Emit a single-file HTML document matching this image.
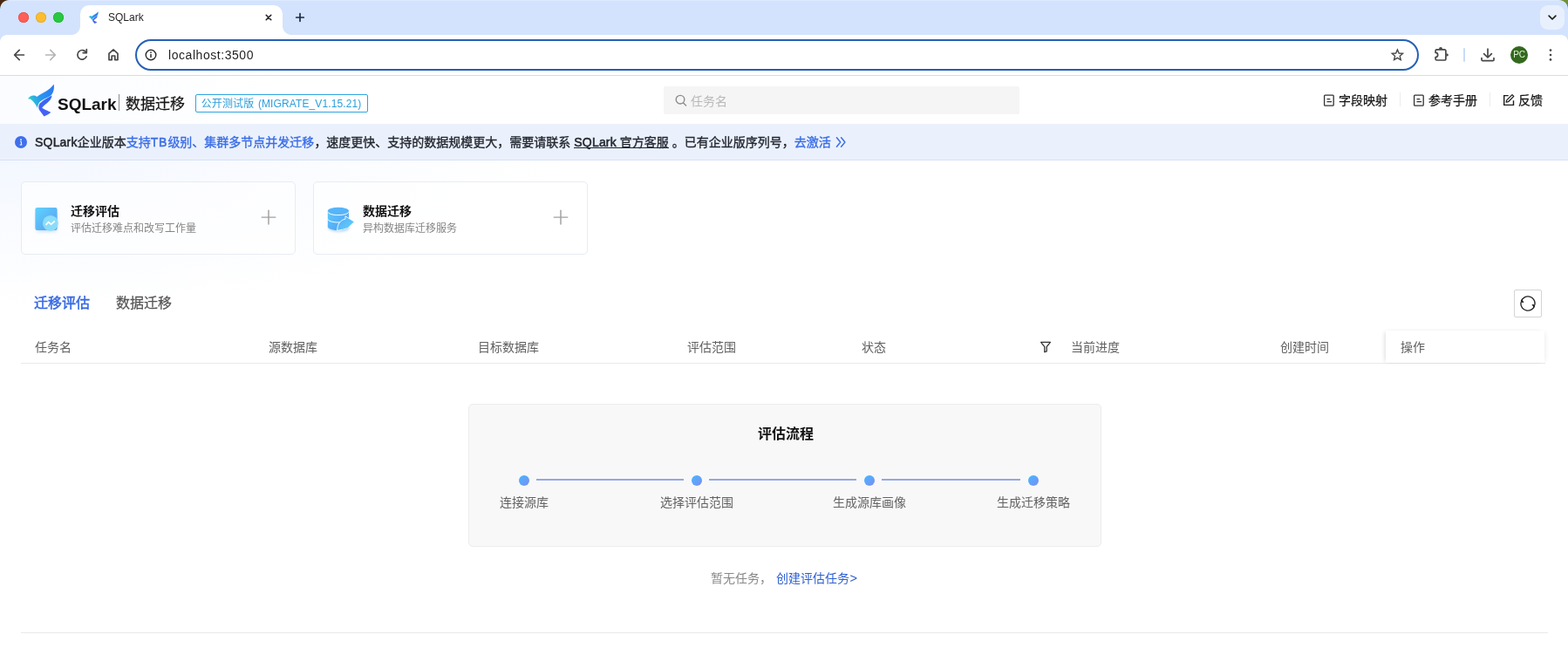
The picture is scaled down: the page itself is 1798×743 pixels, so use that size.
<!DOCTYPE html>
<html lang="zh-CN">
<head>
<meta charset="utf-8">
<title>SQLark</title>
<style>
*{box-sizing:border-box;margin:0;padding:0}
html,body{width:1798px;height:743px;overflow:hidden;background:#fff}
body{position:relative;font-family:"Liberation Sans","Noto Sans CJK SC",sans-serif;font-size:14px;color:#333}
.a{position:absolute}
svg{display:block}
.t{position:absolute;white-space:nowrap;line-height:1;will-change:transform}
.ic{position:absolute;overflow:visible;fill:none;stroke-linecap:round;stroke-linejoin:round}

/* ---------- browser chrome ---------- */
#strip{left:0;top:0;width:1798px;height:40px;background:#d3e3fd}
#strip:before{content:"";position:absolute;left:0;top:0;width:100%;height:1px;background:#deeafe}
.corner{width:10px;height:10px;top:0}
#cl{left:0;background:radial-gradient(circle at 10px 10px,rgba(0,0,0,0) 9.4px,#4a2611 10.2px)}
#cr{right:0;background:radial-gradient(circle at 0 10px,rgba(0,0,0,0) 9.4px,#6f8f3a 10.2px)}
.tl{width:12px;height:12px;border-radius:50%;top:14px}
#tab{left:92px;top:6px;width:232px;height:34px;background:#fff;border-radius:10px 10px 0 0}
#tab:before,#tab:after{content:"";position:absolute;bottom:0;width:10px;height:10px}
#tab:before{left:-10px;background:radial-gradient(circle at 0 0,rgba(255,255,255,0) 9.5px,#fff 10.3px)}
#tab:after{right:-10px;background:radial-gradient(circle at 10px 0,rgba(255,255,255,0) 9.5px,#fff 10.3px)}
#tsb{left:1766px;top:6px;width:28px;height:28px;border-radius:9px;background:#e8f0fe}
#bar{left:0;top:40px;width:1798px;height:47px;background:#fff;border-bottom:1px solid #dcdcdc}
#bl,#br{top:40px;width:8px;height:8px}
#bl{left:0;background:radial-gradient(circle at 8px 8px,rgba(211,227,253,0) 7.500px,#d3e3fd 8.300px)}
#br{right:0;background:radial-gradient(circle at 0 8px,rgba(211,227,253,0) 7.500px,#d3e3fd 8.300px)}
#url{left:155px;top:45px;width:1472px;height:36px;border:2px solid #2560b6;border-radius:18px;background:#fff}
#sep{left:1678px;top:55px;width:2px;height:16px;background:#c9dbf7;border-radius:1px}
#ava{will-change:transform;left:1732px;top:53px;width:20px;height:20px;border-radius:50%;background:#33691e;color:#e4f3da;font-size:10px;line-height:20px;text-align:center;letter-spacing:-.3px}
</style>
</head>
<body>

<!-- ================= BROWSER CHROME ================= -->
<div id="strip" class="a"></div>
<div id="cl" class="a corner"></div>
<div id="cr" class="a corner"></div>
<div class="a tl" style="left:21px;background:#ff5f57;box-shadow:inset 0 0 0 .6px #e14640"></div>
<div class="a tl" style="left:41px;background:#febc2e;box-shadow:inset 0 0 0 .6px #e0a028"></div>
<div class="a tl" style="left:61px;background:#28c840;box-shadow:inset 0 0 0 .6px #1eab2c"></div>
<div id="tab" class="a"></div>
<!-- favicon -->
<svg class="a" style="left:99.4px;top:10.8px" width="16.63" height="18.47" viewBox="0 0 669 743">
  <use href="#bird"/>
</svg>
<div class="t" style="left:124px;top:14.1px;font-size:12px;color:#1f1f1f">SQLark</div>
<svg class="ic" style="left:0;top:0" width="1798" height="86" viewBox="0 0 1798 86">
  <!-- tab close / new tab / tab search chevron -->
  <path d="M305.200 17.200l5.600 5.600M310.800 17.200l-5.600 5.600" stroke="#1f1f1f" stroke-width="1.5"/>
  <path d="M339.700 20h8.600M344 15.700v8.600" stroke="#1f2a44" stroke-width="1.7"/>
</svg>
<div id="tsb" class="a"></div>
<svg class="ic" style="left:0;top:0" width="1798" height="86" viewBox="0 0 1798 86">
  <path d="M1776.1 18.1l3.9 3.9 3.9-3.9" stroke="#1f1f1f" stroke-width="1.7"/>
</svg>

<div id="bar" class="a"></div>
<div id="bl" class="a"></div><div id="br" class="a"></div>
<div id="url" class="a"></div>
<div class="t" style="left:193px;top:56.2px;font-size:14px;letter-spacing:.55px;color:#1f1f1f">localhost:3500</div>
<div id="sep" class="a"></div>
<div id="ava" class="a">PC</div>
<svg class="ic" style="left:0;top:0" width="1798" height="86" viewBox="0 0 1798 86" stroke="#474747" stroke-width="1.7">
  <!-- back -->
  <path d="M27.4 63H17.2M22.2 57.4l-5.600 5.600 5.600 5.600"/>
  <!-- forward (disabled) -->
  <path d="M52.600 63H62.800M57.800 57.400l5.600 5.600-5.600 5.600" stroke="#b5b5b5"/>
  <!-- reload -->
  <path d="M98.900 60.400A5.300 5.300 0 1 0 99.100 64.800"/>
  <path d="M99.300 56.500v4.100h-4.100"/>
  <!-- home -->
  <path d="M125 68.600v-7.300l5-4.400 5 4.400v7.300h-3.200v-4.600h-3.600v4.600z"/>
  <!-- site info -->
  <circle cx="173" cy="63" r="5.800" stroke-width="1.4" stroke="#2b2b2b"/>
  <path d="M173 62.500v3.100" stroke-width="1.500" stroke="#2b2b2b"/><circle cx="173" cy="60.100" r=".9" fill="#2b2b2b" stroke="none"/>
  <!-- star -->
  <path transform="translate(1602.400 62.900) scale(.9) translate(-1602.600 -63.200)" d="M1602.600 56.600l1.950 4.500 4.900.45-3.700 3.250 1.100 4.800-4.250-2.550-4.250 2.550 1.100-4.800-3.700-3.250 4.900-.45z" stroke-width="1.55" stroke-linejoin="miter"/>
  <!-- extensions -->
  <path d="M1646.100 58.300a1.500 1.500 0 0 1 1.500-1.500h8.800a1.500 1.500 0 0 1 1.500 1.500v9.200a1.500 1.500 0 0 1-1.500 1.500h-8.800a1.500 1.500 0 0 1-1.500-1.500v-2a2.600 2.600 0 0 0 0-5.200z"/><path d="M1650 56.300a2 2.200 0 0 1 4 0zM1658.500 61.200a2.400 1.700 0 0 1 0 3.400z" fill="#474747" stroke="none"/>
  <!-- download -->
  <path d="M1706 56.200v9.600M1701.600 61.600l4.400 4.400 4.400-4.400M1699 66.600v1.900a1.200 1.200 0 0 0 1.200 1.200h11.600a1.200 1.200 0 0 0 1.200-1.200v-1.900"/>
  <!-- menu -->
  <g fill="#474747" stroke="none"><circle cx="1778" cy="57.600" r="1.35"/><circle cx="1778" cy="63" r="1.35"/><circle cx="1778" cy="68.400" r="1.35"/></g>
</svg>

<!-- shared symbols -->
<svg width="0" height="0" style="position:absolute"><defs>
  <linearGradient id="bg1" gradientUnits="userSpaceOnUse" x1="110" y1="340" x2="545" y2="110"><stop offset="0" stop-color="#3dd0c0"/><stop offset=".16" stop-color="#2bb4dc"/><stop offset=".38" stop-color="#2a98f0"/><stop offset="1" stop-color="#2b76f2"/></linearGradient>
  <linearGradient id="bg2" gradientUnits="userSpaceOnUse" x1="300" y1="620" x2="510" y2="300"><stop offset="0" stop-color="#4a5ff7"/><stop offset="1" stop-color="#2f6bf3"/></linearGradient>
  <g id="bird">
    <path fill="url(#bg1)" d="M105 345C135 295 205 268 257 312C330 245 480 205 545 95C562 195 525 268 482 300C400 342 312 378 290 422C275 452 268 480 266 502C240 440 190 380 150 352z"/>
    <path fill="url(#bg2)" d="M515 288C432 330 332 390 302 432C280 470 284 512 300 540L380 646C430 622 470 600 496 575C440 552 382 526 345 500C382 432 500 400 515 288z"/>
  </g>
</defs></svg>

<!-- ================= PAGE ================= -->
<style>
#hdr{left:0;top:87px;width:1798px;height:55px;background:linear-gradient(90deg,#fafcff 0,#fff 18%,#fff 100%)}
#main{left:0;top:184px;width:1798px;height:559px;background:radial-gradient(ellipse 640px 170px at 0 0,#f3f7ff 0,#f9fbff 45%,#fff 100%)}
#badge{will-change:transform;left:224px;top:108px;width:198px;height:21px;border:1px solid #2ea5de;border-radius:2px;color:#2e9fda;font-size:12px;line-height:19px;padding:.9px 0 0 5.700px;white-space:nowrap;letter-spacing:.11px;word-spacing:1.200px}
#search{left:761px;top:99px;width:408px;height:32px;background:#f5f5f5;border-radius:2px}
.vd{width:1px;height:16px;top:106px;background:#ececec}
#banner{left:0;top:142px;width:1798px;height:42px;background:#ebf1fc;border-bottom:1px solid #d6e1f8}
#btxt{left:40.3px;top:156.4px;font-size:14px;color:#232830;-webkit-text-stroke:.35px currentColor}
#btxt b{color:#3a6ee6;font-weight:normal}
#btxt i{font-style:normal;-webkit-text-stroke:.55px currentColor;letter-spacing:.2px}
#btxt i.tb{letter-spacing:.9px}
#btxt u{text-decoration:none;position:relative}
#btxt u:after{content:"";position:absolute;left:0;right:0;bottom:1.200px;height:1px;background:#232830}
.card{top:208px;width:315px;height:84px;border:1px solid #e8ecf2;border-radius:5px;background:rgba(255,255,255,.6)}
</style>
<div id="hdr" class="a"></div>
<div id="main" class="a"></div>
<!-- logo -->
<svg class="a" style="left:25px;top:90px" width="45" height="50" viewBox="0 0 669 743"><use href="#bird"/></svg>
<div class="t" style="left:65.8px;top:109.6px;font-size:19px;font-weight:bold;color:#111;font-family:'Liberation Sans',sans-serif">SQLark</div>
<div class="a" style="left:136px;top:108px;width:1px;height:19px;background:#8c8c8c"></div>
<div class="t" style="left:144.2px;top:110.7px;font-size:17px;color:#141414;-webkit-text-stroke:.25px currentColor">数据迁移</div>
<div id="badge" class="a">公开测试版 (MIGRATE_V1.15.21)</div>
<!-- search -->
<div id="search" class="a"></div>
<svg class="ic" style="left:774px;top:108px" width="14" height="14" viewBox="0 0 14 14" stroke="#8c8c8c" stroke-width="1.4"><circle cx="6" cy="6.2" r="4.8"/><path d="M9.600 9.900l3 3"/></svg>
<div class="t" style="left:792px;top:108.600px;font-size:14px;color:#b9b9b9">任务名</div>
<!-- header right links -->
<svg class="ic" style="left:1517px;top:107px" width="14" height="16" viewBox="0 0 14 16" stroke="#333" stroke-width="1.3"><rect x="1.6" y="2.2" width="10.6" height="12" rx=".9"/><path d="M4.500 6.700h3.800M4.500 9.700h5.600" stroke-linecap="butt"/></svg>
<div class="t" style="left:1535.2px;top:108.3px;font-size:14px;color:#161616;-webkit-text-stroke:.25px currentColor">字段映射</div>
<div class="a vd" style="left:1605px"></div>
<svg class="ic" style="left:1620px;top:107px" width="14" height="16" viewBox="0 0 14 16" stroke="#333" stroke-width="1.3"><rect x="1.6" y="2.2" width="10.6" height="12" rx=".9"/><path d="M4.500 6.700h3.800M4.500 9.700h5.600" stroke-linecap="butt"/></svg>
<div class="t" style="left:1637.500px;top:108.3px;font-size:14px;color:#161616;-webkit-text-stroke:.25px currentColor">参考手册</div>
<div class="a vd" style="left:1708px"></div>
<svg class="ic" style="left:1723px;top:107px" width="14" height="16" viewBox="0 0 14 16" stroke="#1c1c1c" stroke-width="1.4"><path d="M6.700 2.600H1.700v10.800h10.800V8.300" stroke-linejoin="miter" stroke-linecap="butt"/><path d="M4.200 10.200l.5-2.300 6.300-6.300 1.800 1.800-6.300 6.300z" stroke-width="1.250"/></svg>
<div class="t" style="left:1741.300px;top:108.3px;font-size:14px;color:#161616;-webkit-text-stroke:.25px currentColor">反馈</div>

<!-- banner -->
<div id="banner" class="a"></div>
<svg class="a" style="left:17px;top:156px" width="14" height="14" viewBox="0 0 14 14"><circle cx="7" cy="7" r="7" fill="#3f70ea"/><circle cx="7" cy="4.200" r=".9" fill="#fff"/><path d="M6 6.300h1.400v3.600M5.700 10h2.700" stroke="#fff" stroke-width=".95" fill="none"/></svg>
<div id="btxt" class="t"><i>SQLark</i>企业版本<b>支持<i class="tb">TB</i>级别、集群多节点并发迁移</b>，速度更快、支持的数据规模更大，需要请联系 <u><i>SQLark</i> 官方客服</u> 。已有企业版序列号，<b>去激活</b></div>
<svg class="ic" style="left:957px;top:155px" width="14" height="16" viewBox="0 0 14 16" stroke="#3a6ee6" stroke-width="1.5"><path d="M2.400 2.800l4.300 5.200-4.300 5.200M7.600 2.800l4.300 5.200-4.300 5.200"/></svg>

<!-- cards -->
<div class="a card" style="left:24px"></div>
<div class="a card" style="left:359px"></div>
<svg class="a" style="left:36px;top:232px;overflow:visible" width="40" height="40" viewBox="0 0 40 40">
  <defs><linearGradient id="i1g" x1="0" y1="0" x2="1" y2="1"><stop offset="0" stop-color="#5fd3fb"/><stop offset="1" stop-color="#5a9cf5"/></linearGradient>
  <filter id="i1s" x="-40%" y="-40%" width="180%" height="180%"><feGaussianBlur stdDeviation="2"/></filter></defs>
  <rect x="6" y="10" width="23" height="23" rx="3" fill="#7db4f8" opacity=".55" filter="url(#i1s)"/>
  <rect x="4.4" y="6.1" width="25.2" height="25.9" rx="2.2" fill="url(#i1g)"/>
  <circle cx="21.9" cy="23.9" r="9" fill="#8fe1f8" opacity=".92"/>
  <path d="M16.600 25.800l3-3.100 2.900 2.400 4.400-3.600" fill="none" stroke="#fff" stroke-width="1.7" stroke-linejoin="miter"/>
</svg>
<svg class="a" style="left:370px;top:232px;overflow:visible" width="40" height="40" viewBox="0 0 40 40">
  <defs><linearGradient id="i2g" x1="0" y1="0" x2="1" y2="1"><stop offset="0" stop-color="#60ccfb"/><stop offset="1" stop-color="#4d98f4"/></linearGradient>
  <linearGradient id="i2a" x1="0" y1="0" x2="1" y2="1"><stop offset="0" stop-color="#55a8f7"/><stop offset="1" stop-color="#62d4fc"/></linearGradient>
  <filter id="i2s" x="-40%" y="-40%" width="180%" height="180%"><feGaussianBlur stdDeviation="1.8"/></filter></defs>
  <ellipse cx="18.5" cy="29" rx="12" ry="4.5" fill="#7db4f8" opacity=".6" filter="url(#i2s)"/>
  <path d="M5.800 9.800v18.200c0 2.200 5.400 4 12.100 4s12.100-1.800 12.100-4V9.800z" fill="url(#i2g)"/>
  <ellipse cx="17.9" cy="9.8" rx="12.1" ry="4" fill="#56b4f9"/>
  <path d="M5.800 10.600c0 2.200 5.400 4 12.100 4s12.100-1.800 12.100-4M5.800 19c0 2.200 5.400 4 12.100 4s12.100-1.800 12.100-4" fill="none" stroke="#fff" stroke-width="1"/>
  <path d="M16.600 32.400c.2-7.600 3.800-12.400 9.400-13.200v-3.400l10.400 6.500-7.600 7.300c-3.600 1.300-7.800 2.200-12.200 2.800z" fill="url(#i2a)" stroke="#fff" stroke-width=".9" stroke-linejoin="round"/>
</svg>
<div class="t" style="left:80.6px;top:235px;font-size:14px;color:#111;font-weight:bold">迁移评估</div>
<div class="t" style="left:80.8px;top:256.100px;font-size:12px;color:#858585">评估迁移难点和改写工作量</div>
<div class="t" style="left:416px;top:235px;font-size:14px;color:#111;font-weight:bold">数据迁移</div>
<div class="t" style="left:416.2px;top:256.100px;font-size:12px;color:#858585">异构数据库迁移服务</div>
<svg class="ic" style="left:299px;top:240px" width="18" height="18" viewBox="0 0 18 18" stroke="#a0a0a0" stroke-width="1.45" stroke-linecap="butt"><path d="M1.200 9.100h15.600M9 1.300v15.600"/></svg>
<svg class="ic" style="left:634px;top:240px" width="18" height="18" viewBox="0 0 18 18" stroke="#a0a0a0" stroke-width="1.45" stroke-linecap="butt"><path d="M1.200 9.100h15.600M9 1.300v15.600"/></svg>
<!-- tabs -->
<div class="t" style="left:38.6px;top:339.900px;font-size:16px;color:#3769e3;-webkit-text-stroke:.5px currentColor">迁移评估</div>
<div class="t" style="left:132.6px;top:339.900px;font-size:16px;color:#555;-webkit-text-stroke:.25px currentColor">数据迁移</div>
<!-- refresh button -->
<div class="a" style="left:1736px;top:332px;width:32px;height:32px;border:1px solid #d4d4d4;border-radius:2px;background:#fff"></div>
<svg class="ic" style="left:1742px;top:338px" width="20" height="20" viewBox="0 0 20 20" stroke="#222" stroke-width="1.35" stroke-linecap="butt">
  <path d="M2.400 7.200A8.100 8.100 0 0 1 18.050 11M17.600 12.800A8.100 8.100 0 0 1 1.950 9"/>
  <path d="M1.900 8.700l3.700.35-2.700-4.300zM18.100 11.300l-3.700-.35 2.700 4.300z" fill="#222" stroke="none"/>
</svg>
<!-- table header -->
<style>
.th{top:390.900px;font-size:14px;color:#616161}
#thline{left:24px;top:416px;width:1748px;height:1px;background:#e9e9e9}
#opcol{left:1589px;top:379px;width:182px;height:37px;background:#fff;box-shadow:-3px 0 5px -2px rgba(0,0,0,.14),3px 0 5px -2px rgba(0,0,0,.07)}
</style>
<div id="thline" class="a"></div>
<div id="opcol" class="a"></div>
<div class="t th" style="left:39.6px">任务名</div>
<div class="t th" style="left:307.8px">源数据库</div>
<div class="t th" style="left:548.3px">目标数据库</div>
<div class="t th" style="left:787.8px">评估范围</div>
<div class="t th" style="left:988px">状态</div>
<svg class="ic" style="left:1192px;top:391px" width="14" height="14" viewBox="0 0 14 14" stroke="#333" stroke-width="1.3" stroke-linejoin="miter"><path d="M1.600 1.400h10.800L8.200 6.600v5.200l-2.400.9V6.600z"/></svg>
<div class="t th" style="left:1228.4px">当前进度</div>
<div class="t th" style="left:1467.6px">创建时间</div>
<div class="t th" style="left:1606px">操作</div>

<!-- flow box -->
<style>
#flow{left:537px;top:463px;width:726px;height:164px;background:#f8f8f8;border:1px solid #ececec;border-radius:5px}
.dot{width:12px;height:12px;top:545px;border-radius:50%;background:linear-gradient(135deg,#4ab4ff 10%,#7d8ef2 95%)}
.ln{height:2px;top:549px;background:#94a8e0}
.fl{top:569.200px;font-size:14px;color:#636363}
</style>
<div id="flow" class="a"></div>
<div class="t" style="left:869.4px;top:489.600px;font-size:16px;color:#111;font-weight:bold">评估流程</div>
<div class="a dot" style="left:595px"></div>
<div class="a ln" style="left:615px;width:169px"></div>
<div class="a dot" style="left:793px"></div>
<div class="a ln" style="left:813px;width:169px"></div>
<div class="a dot" style="left:991px"></div>
<div class="a ln" style="left:1011px;width:159px"></div>
<div class="a dot" style="left:1179px"></div>
<div class="t fl" style="left:573px">连接源库</div>
<div class="t fl" style="left:757px">选择评估范围</div>
<div class="t fl" style="left:955px">生成源库画像</div>
<div class="t fl" style="left:1143px">生成迁移策略</div>
<!-- empty -->
<div class="t" style="left:815.4px;top:655.700px;font-size:14px;color:#888">暂无任务，</div>
<div class="t" style="left:889.8px;top:655.700px;font-size:14px;color:#2f60d2">创建评估任务<span style="margin-left:.6px;font-size:14.500px">&gt;</span></div>
<div class="a" style="left:24px;top:725px;width:1751px;height:1px;background:#e9e9e9"></div>


</body>
</html>
